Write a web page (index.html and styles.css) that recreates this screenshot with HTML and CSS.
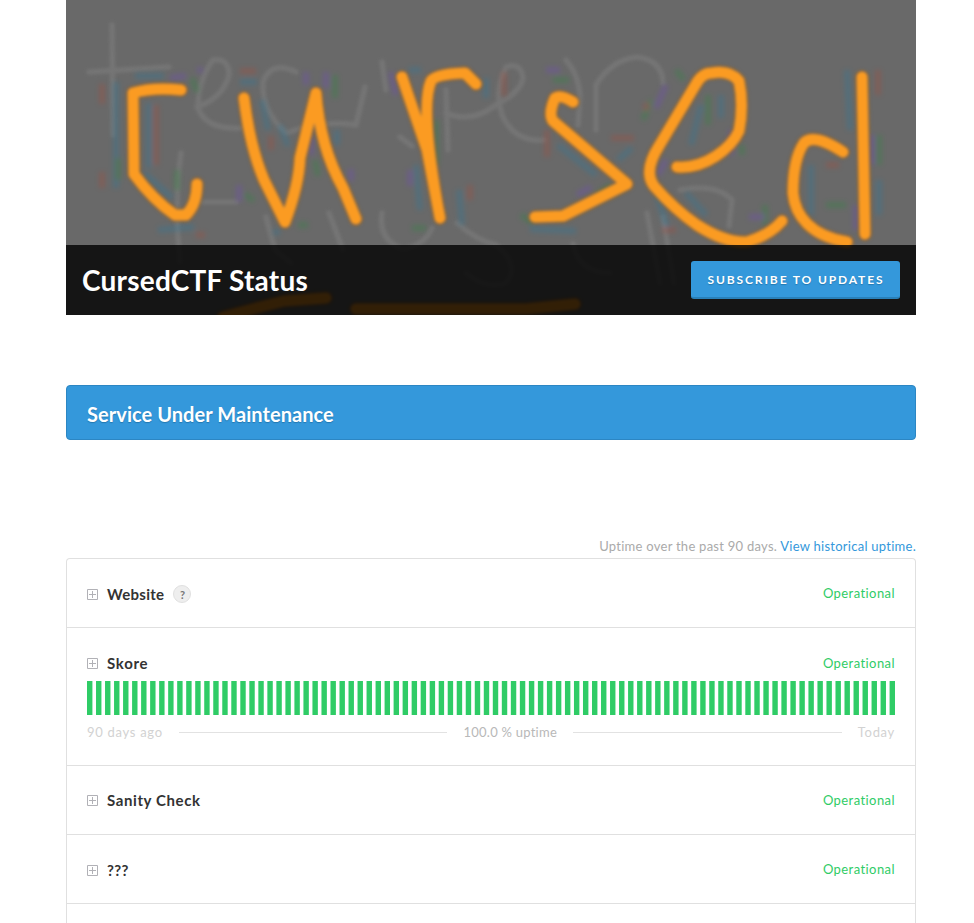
FILE: index.html
```html
<!DOCTYPE html>
<html lang="en">
<head>
<meta charset="utf-8">
<title>CursedCTF Status</title>
<link rel="stylesheet" href="styles.css">
</head>
<body>
<div class="container">
  <header class="masthead">
    <svg class="cover" viewBox="0 0 850 315" aria-hidden="true">
      <defs>
        <filter id="soft" x="-5%" y="-5%" width="110%" height="110%"><feGaussianBlur stdDeviation="1.7"/></filter>
        <filter id="noise" x="-5%" y="-5%" width="110%" height="110%"><feGaussianBlur stdDeviation="2.4"/></filter>
      </defs>
      <rect width="850" height="315" fill="#696969"/>
      <g class="ghost" filter="url(#soft)">
        <path d="M46 25L47 135M23 72L103 67"/>
        <path d="M131 107Q157 98 163 75Q163 58 147 60Q132 80 132 108Q140 130 175 128"/>
        <path d="M230 72Q205 60 197 82Q195 110 220 133Q255 120 290 125L299 87M316 62L320 90M334 137L346 146"/>
        <path d="M380 90L382 150M380 113Q405 124 430 105Q455 92 457 78Q455 62 440 67Q428 90 436 115Q448 142 478 140"/>
        <path d="M500 60Q513 75 514 97L512 125M530 130V85Q545 60 571 57Q596 60 597 83"/>
        <path d="M115 153Q108 200 114 262M137 202H170M200 217L209 250L225 263M263 213L277 250M316 213Q312 240 337 249Q358 246 366 228"/>
        <path d="M391 223Q410 240 430 245Q455 265 440 283Q420 290 400 273M507 244Q512 272 544 273"/>
        <path d="M581 213L594 283M597 217L608 283M614 190Q650 183 666 200L663 226"/>
      </g>
      <g filter="url(#noise)" opacity=".4">
        <path class="fringe blue" d="M50 82V188M69 76H98M83 103V168M78 173L106 198M92 230L128 227M174 82H191M196 100L202 130M214 125L222 146M207 232H214M271 130V145M343 70H355M420 78V98M350 165L354 210M393 190L396 225M492 145L530 175M464 229L510 231M552 160L566 148M635 105L625 145M655 95V118M591 195L602 230M620 193L640 215M781 70L784 130M745 165V215M813 180V215"/>
        <path class="fringe green" d="M126 78L131 92M52 158V180M111 170V190M179 194L188 201M249 160L252 176M232 225H242M269 75V98M346 228H360M370 120V165M487 80H503M455 215L467 223M531 195L545 185M642 95V125M585 100L577 120M676 145V155M699 205V225M813 135V165M760 205H780M610 70L618 80"/>
        <path class="fringe purple" d="M104 78L120 76M131 70H137M240 72V85M260 72V88M245 137V155M285 169V181M325 72L330 95M173 185V202M344 170V186M480 70H494M511 195L525 187M592 175L600 160M600 85L590 108M665 130V155M790 205V230M806 135V165M683 217H698"/>
        <path class="fringe red" d="M36 84V104M36 172V188M90 105V165M130 235H139M174 71H190M205 136V150M438 72V96M404 185V200M481 130V157M545 138H568M580 103V110M760 165H773M812 70V95M596 230H610"/>
      </g>
      <g class="marker edge" filter="url(#soft)">
        <path id="word" d="M115 90Q87 87 67 93L68 174Q87 200 109 215H120Q131 204 131 184M178 98Q184 147 198 180L219 222Q233 185 234 158L250 93Q254 147 277 188L290 219M336 77L361 150L374 218M410 84L399 73Q369 74 365 81C357 100 361 145 371 202M507 102Q494 94 489 98Q482 114 487 121L561 184L497 216L469 217M611 167C640 169 665 148 673 131Q678 105 673 81Q664 70 646 73Q636 73 630 84L593 146Q577 171 588 186Q608 209 631 225Q659 243 681 242Q704 235 716 221M777 152Q748 133 738 143Q727 159 727 193C729 216 745 236 781 242M796 77L799 234M157 317Q190 308 218 301L260 298M290 309L350 309L460 309L509 304"/>
      </g>
      <use href="#word" class="marker" filter="url(#soft)"/>
    </svg>
    <div class="titlebar">
      <h1>CursedCTF Status</h1>
      <a class="subscribe"><span>Subscribe to Updates</span></a>
    </div>
  </header>

  <section class="banner"><h2>Service Under Maintenance</h2></section>

  <p class="legend"><span>Uptime over the past 90 days.</span> <a>View historical uptime.</a></p>

  <section class="components">
    <div class="component raised">
      <div class="line">
        <svg class="plus" viewBox="0 0 11 11"><path d="M.5.5h10v10H.5zM5.5 2v7M2 5.5h7"/></svg>
        <span class="name website">Website</span><span class="help">?</span>
        <span class="status">Operational</span>
      </div>
    </div>
    <div class="component">
      <div class="line">
        <svg class="plus" viewBox="0 0 11 11"><path d="M.5.5h10v10H.5zM5.5 2v7M2 5.5h7"/></svg>
        <span class="name skore">Skore</span>
        <span class="status">Operational</span>
      </div>
      <svg class="bars" viewBox="0 0 448 34" preserveAspectRatio="none"></svg>
      <div class="axis"><span class="ago">90 days ago</span><i></i><span class="percent">100.0 % uptime</span><i></i><span class="today">Today</span></div>
    </div>
    <div class="component compact">
      <div class="line">
        <svg class="plus" viewBox="0 0 11 11"><path d="M.5.5h10v10H.5zM5.5 2v7M2 5.5h7"/></svg>
        <span class="name sanity">Sanity Check</span>
        <span class="status">Operational</span>
      </div>
    </div>
    <div class="component raised">
      <div class="line">
        <svg class="plus" viewBox="0 0 11 11"><path d="M.5.5h10v10H.5zM5.5 2v7M2 5.5h7"/></svg>
        <span class="name unknown">???</span>
        <span class="status">Operational</span>
      </div>
    </div>
    <div class="component"></div>
  </section>
</div>
<script src="script.js"></script>
</body>
</html>
```
FILE: styles.css
```css
* { box-sizing: border-box; }
body { margin: 0; height: 923px; overflow: hidden; background: #fff; color: #333; font-family: Lato, "Open Sans", sans-serif; font-size: 14px; font-variant-ligatures: none; }
.container { width: 850px; margin-left: 66px; }
h1, h2, p { margin: 0; }
.masthead { display: grid; height: 315px; grid-template: 245px 70px / 1fr; overflow: hidden; }
.cover { grid-area: 1 / 1 / 3 / 2; width: 850px; height: 315px; display: block; }
.ghost { fill: none; stroke: #747474; stroke-width: 5.5; stroke-linecap: round; stroke-linejoin: round; }
.fringe { fill: none; stroke-width: 6; }
.blue { stroke: #307898; }
.green { stroke: #358445; }
.purple { stroke: #7050b0; }
.red { stroke: #a05040; }
.marker { fill: none; stroke: #fb9b24; stroke-width: 11; stroke-linecap: round; stroke-linejoin: round; }
.edge { stroke: #875f30; stroke-width: 15; opacity: .5; }
.titlebar { grid-area: 2 / 1; z-index: 1; display: flex; align-items: center; justify-content: space-between; padding: 0 16px; background: rgba(0, 0, 0, .8); color: #fff; }
h1 { font-size: 28px; line-height: 40px; font-weight: 700; letter-spacing: .22px; }
.subscribe { width: 209px; height: 38px; border-radius: 3px; background: #3498db; border-bottom: 2px solid #2980b9; text-align: center; font-size: 12px; font-weight: 700; line-height: 37px; letter-spacing: 1.87px; text-indent: 1px; text-transform: uppercase; white-space: nowrap; text-shadow: 0 1px 1px #2378b0; }
.banner { height: 55px; margin-top: 70px; padding: 0 20px; background: #3498db; border: 1px solid #2c86c3; border-radius: 4px; color: #fff; text-shadow: 0 1px 1px #2378b0; }
h2 { font-size: 20px; line-height: 56px; font-weight: 700; letter-spacing: .06px; }
.legend { margin-top: 97px; height: 21px; line-height: 18px; font-size: 13px; text-align: right; color: #aaa; white-space: nowrap; letter-spacing: .26px; }
.legend a { color: #3498db; }
.components { border: 1px solid #e0e0e0; border-radius: 4px 4px 0 0; border-bottom: 0; }
.component { padding: 25px 20px 23px; border-bottom: 1px solid #e0e0e0; }
.line { display: flex; align-items: center; height: 20px; }
.plus { width: 11px; height: 11px; margin-right: 9px; fill: none; stroke: #b1b1b6; }
.name { font-size: 15px; font-weight: 700; }
.website { letter-spacing: .3px; }
.skore { letter-spacing: .7px; }
.sanity { letter-spacing: .6px; }
.unknown { letter-spacing: .4px; }
.help { width: 18px; height: 18px; margin-left: 9px; border: 1px solid #e0e0e0; border-radius: 50%; background: #eee; color: #777; font-size: 11px; font-weight: 700; line-height: 18px; text-align: center; }
.status { margin-left: auto; color: #2fcc66; font-size: 13px; letter-spacing: .43px; }
.raised .status { padding-bottom: 2px; }
.compact { padding: 24px 20px; }
.bars { display: block; width: 808px; height: 34px; margin-top: 8px; fill: #2fcc66; }
.axis { display: flex; align-items: center; height: 17px; margin: 9px 0 1px; font-size: 13px; color: #d2d2d2; white-space: nowrap; }
.axis span { padding-bottom: 2px; }
.axis i { flex: 1; height: 1px; margin: 0 16px; background: #e2e2e2; }
.ago { letter-spacing: .7px; }
.today { letter-spacing: .7px; }
.axis .percent { color: #b8b8b8; letter-spacing: .25px; }
```
FILE: script.js
```js
const bars = document.querySelector('.bars');
for (let day = 0; day < 90; day++) {
  const bar = document.createElementNS('http://www.w3.org/2000/svg', 'rect');
  bar.setAttribute('x', day * 5);
  bar.setAttribute('width', 3);
  bar.setAttribute('height', 34);
  bars.append(bar);
}
```
